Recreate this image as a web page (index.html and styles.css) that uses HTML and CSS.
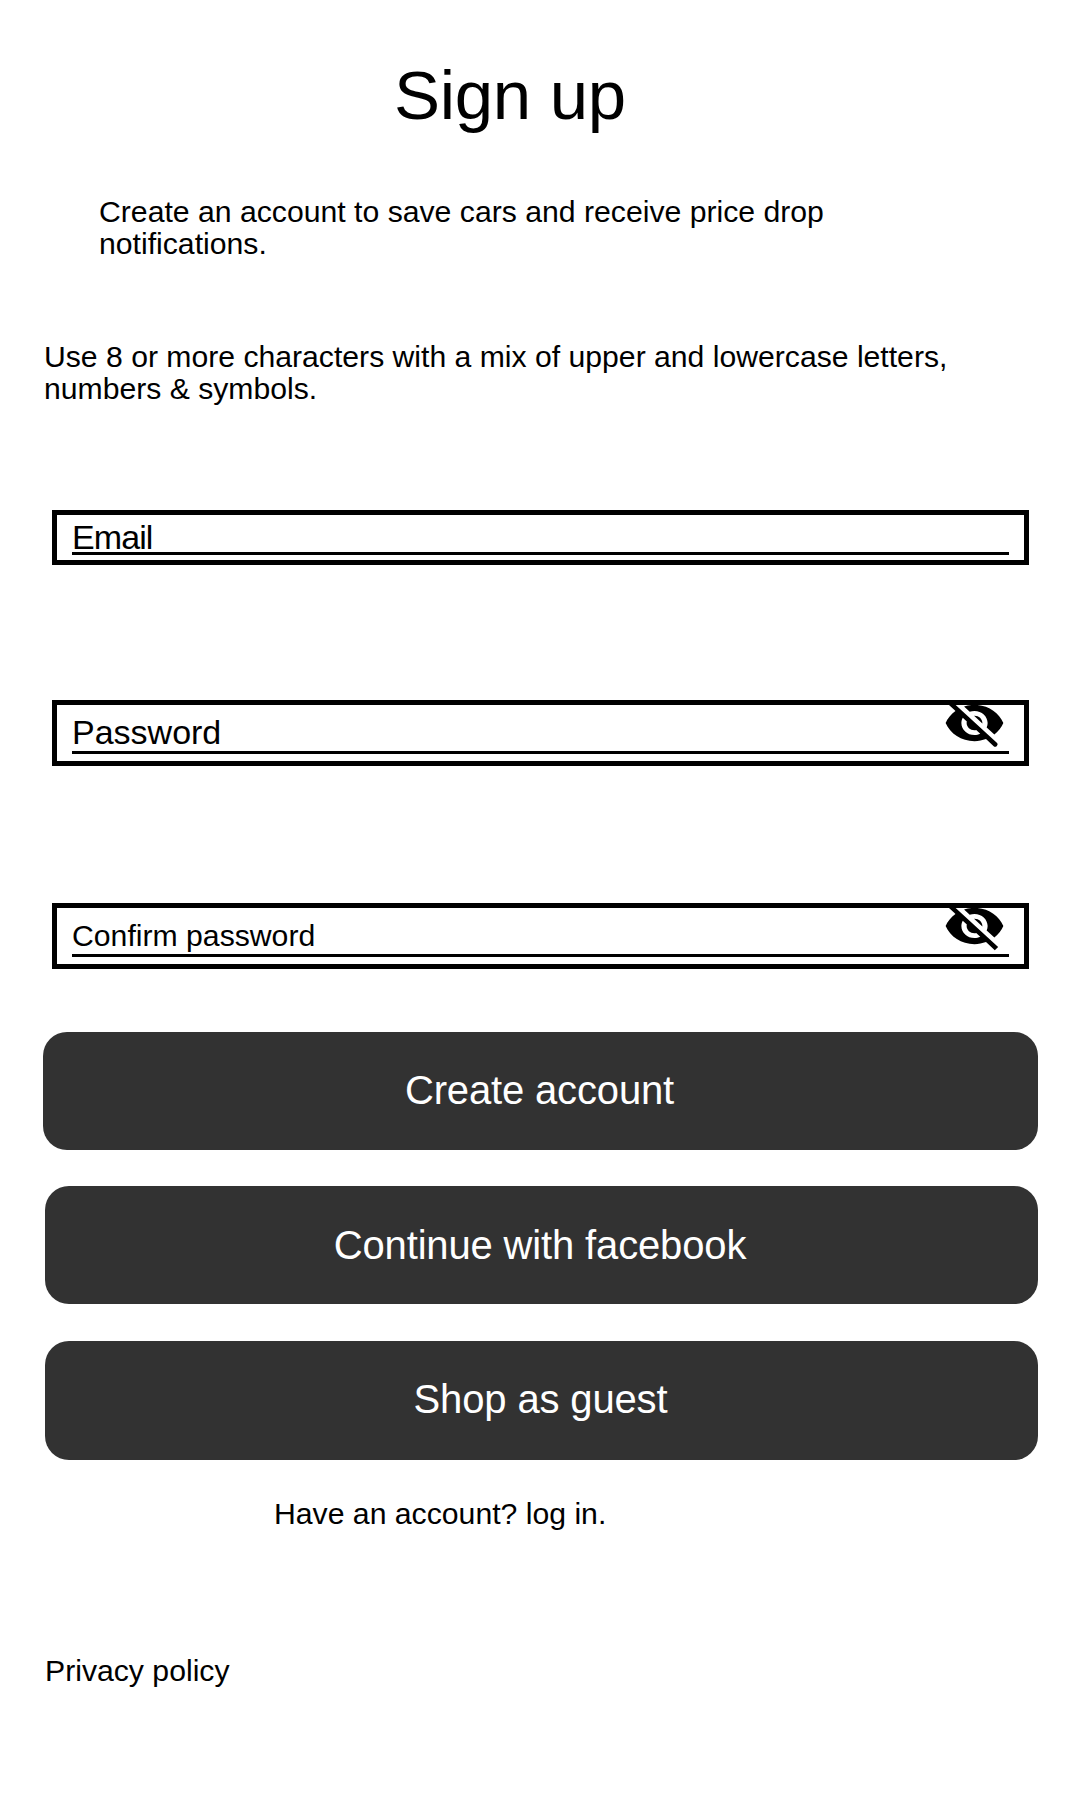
FILE: index.html
```html
<!DOCTYPE html>
<html lang="en">
<head>
  <meta charset="utf-8">
  <title>Sign up</title>
  <link rel="stylesheet" href="styles.css">
</head>
<body>
  <main class="signup">
    <h1 class="title">Sign up</h1>
    <p class="text intro">Create an account to save cars and receive price drop<br>notifications.</p>
    <p class="text hint">Use 8 or more characters with a mix of upper and lowercase letters,<br>numbers &amp; symbols.</p>

    <div class="field email"><div class="entry">Email</div></div>

    <div class="field password">
      <div class="entry">Password</div>
      <svg class="eye" viewBox="0 0 24 24" preserveAspectRatio="none" aria-hidden="true">
        <path d="M12 7c2.76 0 5 2.24 5 5 0 .65-.13 1.26-.36 1.83l2.92 2.92c1.51-1.26 2.7-2.89 3.43-4.75C21.27 7.61 17 4.5 12 4.5c-1.4 0-2.74.25-3.98.7l2.16 2.16C10.74 7.13 11.35 7 12 7zM2 4.27l2.28 2.28.46.46C3.08 8.3 1.78 10.02 1 12c1.73 4.39 6 7.5 11 7.5 1.55 0 3.03-.3 4.38-.84l.42.42L19.2 21.5Q19.9 22.2 20.5 21.5 21.1 20.8 20.5 20.2L3.27 3 2 4.27zM7.53 9.8l1.55 1.55c-.05.21-.08.43-.08.65 0 1.66 1.34 3 3 3 .22 0 .44-.03.65-.08l1.55 1.55c-.67.33-1.41.53-2.2.53-2.76 0-5-2.24-5-5 0-.79.2-1.53.53-2.2zm4.31-.78l3.15 3.15.02-.16c0-1.66-1.34-3-3-3l-.17.01z"/>
      </svg>
    </div>

    <div class="field confirm">
      <div class="entry">Confirm password</div>
      <svg class="eye" viewBox="0 0 24 24" preserveAspectRatio="none" aria-hidden="true">
        <path d="M12 7c2.76 0 5 2.24 5 5 0 .65-.13 1.26-.36 1.83l2.92 2.92c1.51-1.26 2.7-2.89 3.43-4.75C21.27 7.61 17 4.5 12 4.5c-1.4 0-2.74.25-3.98.7l2.16 2.16C10.74 7.13 11.35 7 12 7zM2 4.27l2.28 2.28.46.46C3.08 8.3 1.78 10.02 1 12c1.73 4.39 6 7.5 11 7.5 1.55 0 3.03-.3 4.38-.84l.42.42L19.73 22 21 20.73 3.27 3 2 4.27zM7.53 9.8l1.55 1.55c-.05.21-.08.43-.08.65 0 1.66 1.34 3 3 3 .22 0 .44-.03.65-.08l1.55 1.55c-.67.33-1.41.53-2.2.53-2.76 0-5-2.24-5-5 0-.79.2-1.53.53-2.2zm4.31-.78l3.15 3.15.02-.16c0-1.66-1.34-3-3-3l-.17.01z"/>
      </svg>
    </div>

    <button class="button create">Create account</button>
    <button class="button facebook">Continue with facebook</button>
    <button class="button guest">Shop as guest</button>

    <p class="text login">Have an account? log in.</p>
    <p class="text privacy">Privacy policy</p>
  </main>
</body>
</html>
```
FILE: styles.css
```css
* {
  box-sizing: border-box;
}

body {
  margin: 0;
  background: #fff;
  color: #000;
  font-family: "Liberation Sans", Arial, sans-serif;
}

.signup {
  display: flex;
  flex-direction: column;
  height: 1800px;
  padding: 56px 42px 0 43px;
}

.title {
  margin: 0 0 60px 351px;
  font-size: 69px;
  font-weight: 400;
  line-height: 80px;
  letter-spacing: -0.3px;
}

.text {
  margin: 0;
  font-size: 30.2px;
  line-height: 32px;
  white-space: nowrap;
}

.intro {
  margin: 0 0 81px 56px;
}

.hint {
  margin: 0 0 105px 1px;
  font-size: 30.17px;
}

.field {
  position: relative;
  flex: none;
  width: 977px;
  margin-left: 9px;
  padding: 0 15px;
  border: 5px solid #000;
  overflow: hidden;
}

.entry {
  border-bottom: 3px solid #000;
  font-size: 34px;
  white-space: nowrap;
}

.email {
  height: 55px;
  margin-bottom: 135px;
}

.email .entry {
  height: 40px;
  line-height: 45px;
  letter-spacing: -0.9px;
}

.password {
  height: 66px;
  margin-bottom: 137px;
}

.password .entry {
  height: 49px;
  line-height: 54px;
}

.confirm {
  height: 66px;
  margin-bottom: 63px;
}

.confirm .entry {
  height: 49px;
  font-size: 30.2px;
  line-height: 55px;
}

.eye {
  position: absolute;
  top: -11px;
  right: 18px;
  width: 63px;
  height: 58px;
}

.button {
  flex: none;
  height: 118px;
  padding: 0 2px 2px 0;
  border: 0;
  border-radius: 24px;
  background: #323232;
  color: #fff;
  font: 40px "Liberation Sans", Arial, sans-serif;
  letter-spacing: -0.15px;
}

.create {
  margin-bottom: 36px;
}

.facebook {
  margin: 0 0 37px 2px;
  padding: 0 3px 0 0;
}

.guest {
  height: 119px;
  margin: 0 0 38px 2px;
}

.login {
  margin: 0 0 125px 231px;
}

.privacy {
  margin-left: 2px;
}
```
